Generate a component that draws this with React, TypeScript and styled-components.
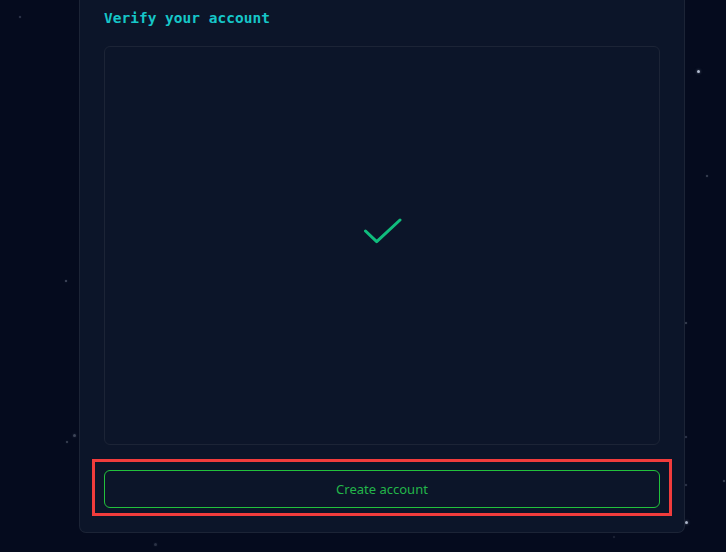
import React from "react";
import styled, { createGlobalStyle } from "styled-components";

const GlobalStyle = createGlobalStyle`
  html, body {
    margin: 0;
    padding: 0;
    background: #050b1e;
    height: 100%;
  }
  #root { min-height: 100%; }
`;

const Page = styled.div`
  position: relative;
  width: 726px;
  height: 552px;
  overflow: hidden;
  background: #050b1e;
  font-family: "Noto Sans", "Open Sans", sans-serif;
  display: flex;
  justify-content: flex-start;
  align-items: flex-start;
  padding-left: 79px;
  box-sizing: border-box;
`;

const Star = styled.span<{ $size: number; $alpha: number }>`
  position: absolute;
  width: ${(p) => p.$size}px;
  height: ${(p) => p.$size}px;
  border-radius: 50%;
  background: rgba(200, 210, 230, ${(p) => p.$alpha});
  box-shadow: 0 0 ${(p) => p.$size}px rgba(200, 210, 230, ${(p) => p.$alpha * 0.6});
`;

const Card = styled.section`
  position: relative;
  z-index: 1;
  width: 606px;
  box-sizing: border-box;
  background: #0c1529;
  border: 1px solid #1c2436;
  border-top: none;
  border-radius: 0 0 7px 7px;
  padding: 8px 24px 16px 24px;
  display: flex;
  flex-direction: column;
`;

const Title = styled.h2`
  margin: 0 0 18px 0;
  font-family: "DejaVu Sans Mono", "Liberation Mono", monospace;
  font-weight: 700;
  font-size: 14.5px;
  line-height: 20px;
  color: #16c6c8;
`;

const VerifyBox = styled.div`
  height: 399px;
  border: 1px solid #1c2436;
  border-radius: 6px;
  box-sizing: border-box;
  display: flex;
  align-items: center;
  justify-content: center;
`;

const CheckIcon = styled.svg`
  margin-bottom: 28px;
`;

const Highlight = styled.div`
  margin: 14px -12px 0 -12px;
  border: 3px solid #f13c3c;
  padding: 8px 9px 5px 9px;
`;

const CreateButton = styled.button`
  width: 100%;
  height: 38px;
  box-sizing: border-box;
  background: transparent;
  border: 1px solid #22c13c;
  border-radius: 6px;
  color: #23b54a;
  font-family: "Noto Sans", "Open Sans", sans-serif;
  font-size: 13px;
  cursor: pointer;
`;

const stars: Array<[number, number, number, number]> = [
  [20, 17, 2, 0.25],
  [698, 71, 3, 0.9],
  [707, 176, 2, 0.3],
  [66, 281, 2, 0.35],
  [74, 435, 3, 0.3],
  [67, 442, 2, 0.3],
  [686, 323, 2, 0.3],
  [686, 437, 2, 0.25],
  [686, 485, 2, 0.25],
  [686, 522, 3, 0.85],
  [155, 544, 3, 0.2],
  [614, 537, 2, 0.15],
  [724, 481, 2, 0.3],
];

export default function App() {
  return (
    <>
      <GlobalStyle />
      <Page>
        {stars.map(([x, y, s, a], i) => (
          <Star
            key={i}
            $size={s}
            $alpha={a}
            style={{ left: x - s / 2, top: y - s / 2 }}
          />
        ))}
        <Card>
          <Title>Verify your account</Title>
          <VerifyBox>
            <CheckIcon width="40" height="30" viewBox="0 0 40 30" fill="none">
              <path
                d="M3.5 14 L14.7 24.7 L38 3"
                stroke="#10bd7d"
                strokeWidth="3"
                strokeLinecap="round"
                strokeLinejoin="round"
              />
            </CheckIcon>
          </VerifyBox>
          <Highlight>
            <CreateButton>Create account</CreateButton>
          </Highlight>
        </Card>
      </Page>
    </>
  );
}
